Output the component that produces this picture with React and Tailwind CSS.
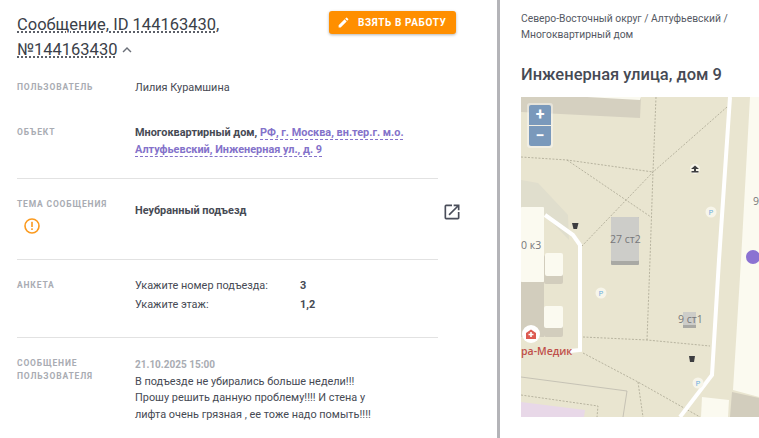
import React from "react";
import { MdEdit, MdOpenInNew, MdExpandLess } from "react-icons/md";

const Label = ({ children, className = "" }) => (
  <div className={"w-[118px] shrink-0 text-[8.500px] leading-[13px] font-bold tracking-[0.83px] uppercase text-[#a9acb3] " + className}>{children}</div>
);

const P = ({ x, y }) => (
  <g>
    <circle cx={x} cy={y} r="5.5" fill="#f7f5ea" />
    <text x={x} y={y + 3} textAnchor="middle" fontSize="8" fill="#6aaee0" fontFamily="Open Sans, sans-serif">P</text>
  </g>
);

const MapArt = () => (
  <svg viewBox="521 97 238 320" className="block w-[238px] h-[320px]">
    <rect x="521" y="97" width="238" height="320" fill="#e9e5d0" />
    <polygon points="521,97 641,97 640,118 521,112" fill="#d5d0c0" />
    <polygon points="587,97 641,97 640,100" fill="#fbfaf0" />
    <polygon points="521,180 538,183 568,215 569,240 545,215 521,207" fill="#e0decd" />
    <polygon points="732,392 759,398 759,417 730,417" fill="#d2cdbd" />
    <polygon points="750,97 759,97 759,397 733,390 741,260" fill="#fbfaf0" />
    <polygon points="702,397 729,400 728,417 701,417" fill="#fbfaf0" />
    <polygon points="521,402 585,410 584,417 521,417" fill="#e8d8e8" />
    <polyline points="521,377 627,391 623,417" fill="none" stroke="#bdb9ad" strokeWidth="0.8" />
    <g fill="none" stroke="#a9a692" strokeWidth="0.8" strokeDasharray="2 1.5">
      <polyline points="521,157 567,160 653,172" />
      <polyline points="567,160 651,217" />
      <polyline points="727,107 653,172 582,246" />
      <polyline points="656,97 653,172 650,260 647,340" />
      <polyline points="583,337 647,340 710,346" />
      <polyline points="583,353 638,382 700,417" />
      <polyline points="638,382 643,417" />
      <polyline points="521,395 598,406 597,417" />
    </g>
    <polyline points="730,97 719,260 712,375 680,417" fill="none" stroke="#fff" strokeWidth="4" />
    <polyline points="545,215 573,235 580,245 580,350 570,351" fill="none" stroke="#fff" strokeWidth="4" />
    <rect x="521" y="282" width="23" height="55" fill="#d2cdbd" />
    <rect x="521" y="207" width="23" height="75" rx="1" fill="#fbfaf0" />
    <rect x="544" y="255" width="19" height="29" rx="2" fill="#d2cdbd" />
    <rect x="545" y="253" width="18" height="23" rx="2" fill="#fbfaf0" />
    <rect x="544" y="308" width="19" height="29" rx="2" fill="#d2cdbd" />
    <rect x="544" y="306" width="19" height="22" rx="2" fill="#fbfaf0" />
    <rect x="611" y="217" width="28" height="48" rx="1" fill="#a9a9a4" />
    <rect x="611" y="217" width="28" height="44" rx="1" fill="#cdcdc9" />
    <rect x="683" y="312" width="13" height="16" fill="#a9a9a4" />
    <rect x="683" y="312" width="13" height="13" fill="#cdcdc9" />
    <g fill="#77777a" fontFamily="Open Sans, sans-serif" fontSize="10.5">
      <text x="610" y="243">27 ст2</text>
      <text x="678" y="323">9 ст1</text>
      <text x="521" y="249">0 к3</text>
      <text x="753" y="205">9</text>
    </g>
    <P x={711} y={212} />
    <P x={601} y={293} />
    <P x={698} y={383} />
    <circle cx="753" cy="257" r="7" fill="#8b72d2" />
    <circle cx="531" cy="334" r="9" fill="#fff" />
    <path d="M531 329.500 L536 333 V339 H526 V333 Z" fill="#dd5b52" />
    <path d="M530.200 332 h1.600 v1.700 h1.700 v1.500 h-1.700 v1.700 h-1.600 v-1.700 h-1.700 v-1.500 h1.700 z" fill="#fff" />
    <text x="521" y="354.500" fontSize="10.500" fontWeight="600" fill="#c0504a" fontFamily="Open Sans, sans-serif">ра-Медик</text>
    <g fill="#3d3d40">
      <circle cx="695" cy="169" r="5" fill="#f7f5ea" />
      <path d="M695 165.500 L699 169 H696 V171 H698.500 V172.500 H691.500 V171 H694 V169 H691 Z" />
      <path d="M572 223 H578.500 L577 229 H573.500 Z" />
      <path d="M689 356 H695 L694 362 H690 Z" />
    </g>
  </svg>
);

export default function App() {
  return (
    <div className="flex w-[759px] h-[438px] overflow-hidden bg-white text-[#464a54] font-['Roboto',sans-serif] text-[10.900px]">
      <div className="w-[497px] shrink-0 pl-[17px] pr-[59px]">
        <div className="flex justify-between pt-[12px] h-[78px]">
          <div className="w-[290px] text-[16.500px] leading-[25px] text-[#3b3f49]">
            <span className="underline decoration-dotted decoration-[#3b3f49] underline-offset-[2px]">Сообщение, ID 144163430,</span>
            <div className="flex items-center">
              <span className="underline decoration-dotted decoration-[#3b3f49] underline-offset-[2px]">№144163430</span>
              <MdExpandLess className="ml-[1px] w-[18px] h-[18px] text-[#6b6f78]" />
            </div>
          </div>
          <button className="mt-[-1px] mr-[-18px] w-[127px] h-[23px] flex items-center pl-[8px] gap-[8px] rounded-[3px] bg-[#ff8f00] text-white text-[10px] font-bold tracking-[0.6px] shadow-[0_1px_3px_rgba(0,0,0,0.3)]">
            <MdEdit className="w-[13px] h-[13px]" />
            <span>ВЗЯТЬ В РАБОТУ</span>
          </button>
        </div>

        <div className="flex h-[45px] items-start">
          <Label className="mt-[3px]">Пользователь</Label>
          <div className="leading-[22px] -mt-[1px]">Лилия Курамшина</div>
        </div>

        <div className="flex h-[56px] items-start border-b border-[#e2e2e2]">
          <Label className="mt-[3px]">Объект</Label>
          <div className="font-bold leading-[16.500px] mt-[2px] w-[290px]">
            Многоквартирный дом,{" "}
            <span className="text-[#8472ca] underline decoration-dashed decoration-[#8472ca] underline-offset-[3px]">РФ, г. Москва, вн.тер.г. м.о. Алтуфьевский, Инженерная ул., д. 9</span>
          </div>
        </div>

        <div className="flex h-[81px] items-start border-b border-[#e2e2e2] pt-[19px]">
          <div className="w-[118px] shrink-0">
            <Label>Тема сообщения</Label>
            <svg viewBox="0 0 16 16" className="w-[16px] h-[16px] ml-[7px] mt-[7px]">
              <circle cx="8" cy="8" r="7" fill="none" stroke="#fb9a1e" strokeWidth="1.600" />
              <rect x="7.200" y="3.800" width="1.600" height="5.200" fill="#fb9a1e" />
              <rect x="7.200" y="10.300" width="1.600" height="1.700" fill="#fb9a1e" />
            </svg>
          </div>
          <div className="font-bold leading-[22px] flex-1 mt-[2px] text-[#464a54]">Неубранный подъезд</div>
          <MdOpenInNew className="w-[20px] h-[20px] mt-[4px] mr-[-24px] text-[#4a4e5a]" />
        </div>

        <div className="flex h-[78px] items-start border-b border-[#e2e2e2] pt-[19px]">
          <Label>Анкета</Label>
          <div className="leading-[19px] -mt-[3px]">
            <div className="flex"><span className="w-[165px]">Укажите номер подъезда:</span><b>3</b></div>
            <div className="flex"><span className="w-[165px]">Укажите этаж:</span><b>1,2</b></div>
          </div>
        </div>

        <div className="flex items-start pt-[19px]">
          <Label>Сообщение<br />пользователя</Label>
          <div className="w-[280px] leading-[16.500px]">
            <div className="font-bold text-[#a9acb3] text-[10px]">21.10.2025 15:00</div>
            В подъезде не убирались больше недели!!!<br />
            Прошу решить данную проблему!!!! И стена у<br />
            лифта очень грязная , ее тоже надо помыть!!!!
          </div>
        </div>
      </div>

      <div className="w-[3px] shrink-0 bg-[#b4b4b8]" />

      <div className="flex-1 pl-[21px] min-w-0">
        <div className="pt-[11px] text-[10.300px] leading-[16px] text-[#555963] w-[230px]">
          Северо-Восточный округ / Алтуфьевский / Многоквартирный дом
        </div>
        <div className="mt-[22px] text-[16.500px] leading-[20px] font-medium text-[#464a54]">Инженерная улица, дом 9</div>
        <div className="relative mt-[12px] w-[238px] h-[320px]">
          <MapArt />
          <div className="absolute left-[6px] top-[6px] w-[26px] rounded-[3px] bg-white/40 p-[2px]">
            <div className="h-[20px] mb-[1px] flex items-center justify-center bg-[#7a99bb] text-white font-bold text-[16px] leading-none rounded-t-[2px]">+</div>
            <div className="h-[20px] flex items-center justify-center bg-[#7a99bb] text-white font-bold text-[16px] leading-none rounded-b-[2px]">−</div>
          </div>
        </div>
      </div>
    </div>
  );
}
